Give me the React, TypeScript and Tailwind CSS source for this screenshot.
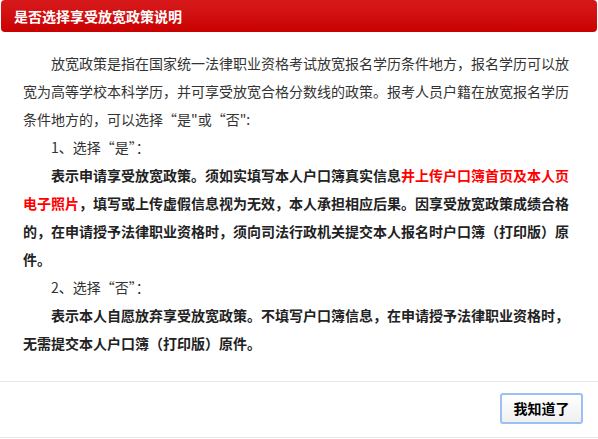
const font = { fontFamily: '"Microsoft YaHei", "Noto Sans CJK SC", "Noto Sans", sans-serif' };

const App = () => {
  return (
    <div className="w-[598px] h-[439px] bg-white flex flex-col" style={font}>
      <div className="mx-[1px] h-[32px] rounded-[4px] bg-linear-to-b from-[#d8191b] to-[#c90000] flex items-center pl-[13px]">
        <span className="text-white text-[14px] font-bold">是否选择享受放宽政策说明</span>
      </div>
      <div className="pl-[23px] pr-[25px] pt-[17px] pb-[24px] text-[14px] leading-[28px] text-[#333]">
        <p className="indent-[28px]">
          放宽政策是指在国家统一法律职业资格考试放宽报名学历条件地方，报名学历可以放宽为高等学校本科学历，并可享受放宽合格分数线的政策。报考人员户籍在放宽报名学历条件地方的，可以选择“是"或“否":
        </p>
        <p className="indent-[28px]">1、选择“是”：</p>
        <p className="indent-[28px] font-bold text-[#222]">
          表示申请享受放宽政策。须如实填写本人户口簿真实信息
          <span className="text-[#ff0000]">井上传户口簿首页及本人页电子照片</span>
          ，填写或上传虚假信息视为无效，本人承担相应后果。因享受放宽政策成绩合格的，在申请授予法律职业资格时，须向司法行政机关提交本人报名时户口簿（打印版）原件。
        </p>
        <p className="indent-[28px]">2、选择“否”：</p>
        <p className="indent-[28px] font-bold text-[#222]">
          表示本人自愿放弃享受放宽政策。不填写户口簿信息，在申请授予法律职业资格时，无需提交本人户口簿（打印版）原件。
        </p>
      </div>
      <div className="border-t border-b border-[#e6e6e6] h-[57px] flex justify-end pt-[11px] pr-[15px]">
        <button className="w-[83px] h-[31px] rounded-[3px] border-2 border-[#9cc0f5] bg-linear-to-b from-white to-[#f0f0f0] text-[14px] font-bold text-black">
          我知道了
        </button>
      </div>
    </div>
  );
};

export default App;
